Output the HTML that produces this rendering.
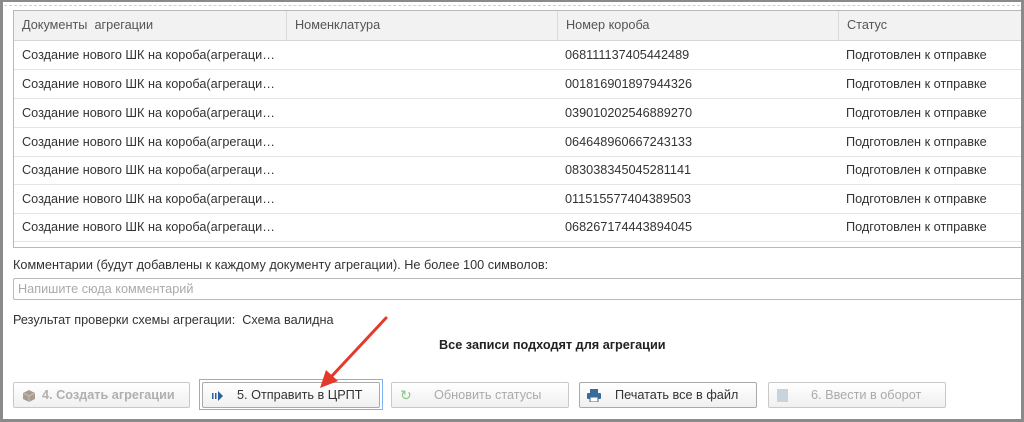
<!DOCTYPE html>
<html><head><meta charset="utf-8"><style>
*{box-sizing:border-box;margin:0;padding:0}
body{width:1024px;height:422px;background:#fff;font-family:"Liberation Sans",Arial,sans-serif;font-size:12.7px;color:#333;position:relative;overflow:hidden}
.frame{position:absolute;left:0;top:0;width:1024px;height:422px;border:3px solid #8a8a8a;border-top:2px solid #8a8a8a;z-index:5}
.dash{position:absolute;left:4px;top:5px;width:1016px;border-top:1px dashed #d0d0d0}
.tbl{position:absolute;left:13px;top:10px;width:1010px;height:238px;border:1px solid #b8b8b8;border-right:none}
.row{position:absolute;left:0;width:100%;height:29px;border-bottom:1px solid #e4e4e4}
.hd{top:0;height:30px;background:#f2f2f2;border-bottom:1px solid #d6d6d6;color:#555}
.c{position:absolute;top:0;line-height:28px;padding-left:8px;white-space:nowrap}
.hd .c{line-height:29px;border-left:1px solid #dadada;height:29px}
.t{position:absolute;white-space:nowrap}
.inp{position:absolute;left:13px;top:278px;width:1010px;height:22px;border:1px solid #bbb;border-right:none;border-radius:2px;color:#aaa;padding-left:4px;line-height:20px}
.btn{position:absolute;top:382px;height:26px;border:1px solid #c8c8c8;border-radius:2px;background:linear-gradient(#fff,#f0f0f0);line-height:24px;color:#aaa}
.btn span{position:absolute;white-space:nowrap}
</style></head><body>
<div class="frame"></div>
<div class="dash"></div>
<div class="tbl">
 <div class="row hd"><div class="c" style="left:0;border-left:none">Документы&nbsp; агрегации</div><div class="c" style="left:272px">Номенклатура</div><div class="c" style="left:543px">Номер короба</div><div class="c" style="left:824px">Статус</div></div>
 <div class="row" style="top:30px"><div class="c">Создание нового ШК на короба(агрегаци…</div><div class="c" style="left:543px">068111137405442489</div><div class="c" style="left:824px">Подготовлен к отправке</div></div>
 <div class="row" style="top:59px"><div class="c">Создание нового ШК на короба(агрегаци…</div><div class="c" style="left:543px">001816901897944326</div><div class="c" style="left:824px">Подготовлен к отправке</div></div>
 <div class="row" style="top:88px"><div class="c">Создание нового ШК на короба(агрегаци…</div><div class="c" style="left:543px">039010202546889270</div><div class="c" style="left:824px">Подготовлен к отправке</div></div>
 <div class="row" style="top:117px"><div class="c">Создание нового ШК на короба(агрегаци…</div><div class="c" style="left:543px">064648960667243133</div><div class="c" style="left:824px">Подготовлен к отправке</div></div>
 <div class="row" style="top:145px"><div class="c">Создание нового ШК на короба(агрегаци…</div><div class="c" style="left:543px">083038345045281141</div><div class="c" style="left:824px">Подготовлен к отправке</div></div>
 <div class="row" style="top:174px"><div class="c">Создание нового ШК на короба(агрегаци…</div><div class="c" style="left:543px">011515577404389503</div><div class="c" style="left:824px">Подготовлен к отправке</div></div>
 <div class="row" style="top:202px"><div class="c">Создание нового ШК на короба(агрегаци…</div><div class="c" style="left:543px">068267174443894045</div><div class="c" style="left:824px">Подготовлен к отправке</div></div>
</div>
<div class="t" style="left:13px;top:258px">Комментарии (будут добавлены к каждому документу агрегации). Не более 100 символов:</div>
<div class="inp">Напишите сюда комментарий</div>
<div class="t" style="left:13px;top:313px">Результат проверки схемы агрегации:&nbsp; Схема валидна</div>
<div class="t" style="left:439px;top:338px;font-weight:bold;color:#222">Все записи подходят для агрегации</div>

<div class="btn" style="left:13px;width:177px"><svg style="position:absolute;left:8px;top:6px" width="14" height="14" viewBox="0 0 14 14"><path d="M7 1L13 4V10L7 13L1 10V4Z" fill="#a89c92"/><path d="M7 7L13 4M7 7V13M7 7L1 4" stroke="#c8bfb8" fill="none"/></svg><span style="left:28px;font-weight:bold;color:#b0b0b0">4. Создать агрегации</span></div>
<div style="position:absolute;left:199px;top:379px;width:184px;height:31px;border:1px solid #7fb2f0"></div>
<div class="btn" style="left:202px;width:178px;top:382px;border-color:#aaa"><svg style="position:absolute;left:9px;top:8px" width="12" height="10" viewBox="0 0 12 10"><rect x="0" y="2" width="1.5" height="6" fill="#2a5f9e"/><rect x="3" y="2" width="1.5" height="6" fill="#2a5f9e"/><path d="M6 0L11 5L6 10Z" fill="#2a5f9e"/></svg><span style="left:34px;color:#333">5. Отправить в ЦРПТ</span></div>
<div class="btn" style="left:391px;width:178px"><span style="left:8px;color:#8bc48b;font-size:14px">↻</span><span style="left:42px">Обновить статусы</span></div>
<div class="btn" style="left:579px;width:178px;border-color:#aaa"><svg style="position:absolute;left:7px;top:6px" width="14" height="13" viewBox="0 0 14 13"><rect x="3" y="0" width="8" height="4" fill="#3b6a98"/><rect x="0" y="4" width="14" height="6" rx="1" fill="#3b6a98"/><rect x="3" y="8" width="8" height="5" fill="#fff" stroke="#3b6a98"/></svg><span style="left:35px;color:#333">Печатать все в файл</span></div>
<div class="btn" style="left:768px;width:178px"><div style="position:absolute;left:8px;top:6px;width:11px;height:13px;background:#c9d3dc"></div><span style="left:42px">6. Ввести в оборот</span></div>

<svg style="position:absolute;left:0;top:0" width="1024" height="422"><line x1="386" y1="318" x2="330" y2="378" stroke="#e33a2c" stroke-width="3" stroke-linecap="round"/><path d="M320 388L326 370L338 381Z" fill="#e33a2c"/></svg>
</body></html>
